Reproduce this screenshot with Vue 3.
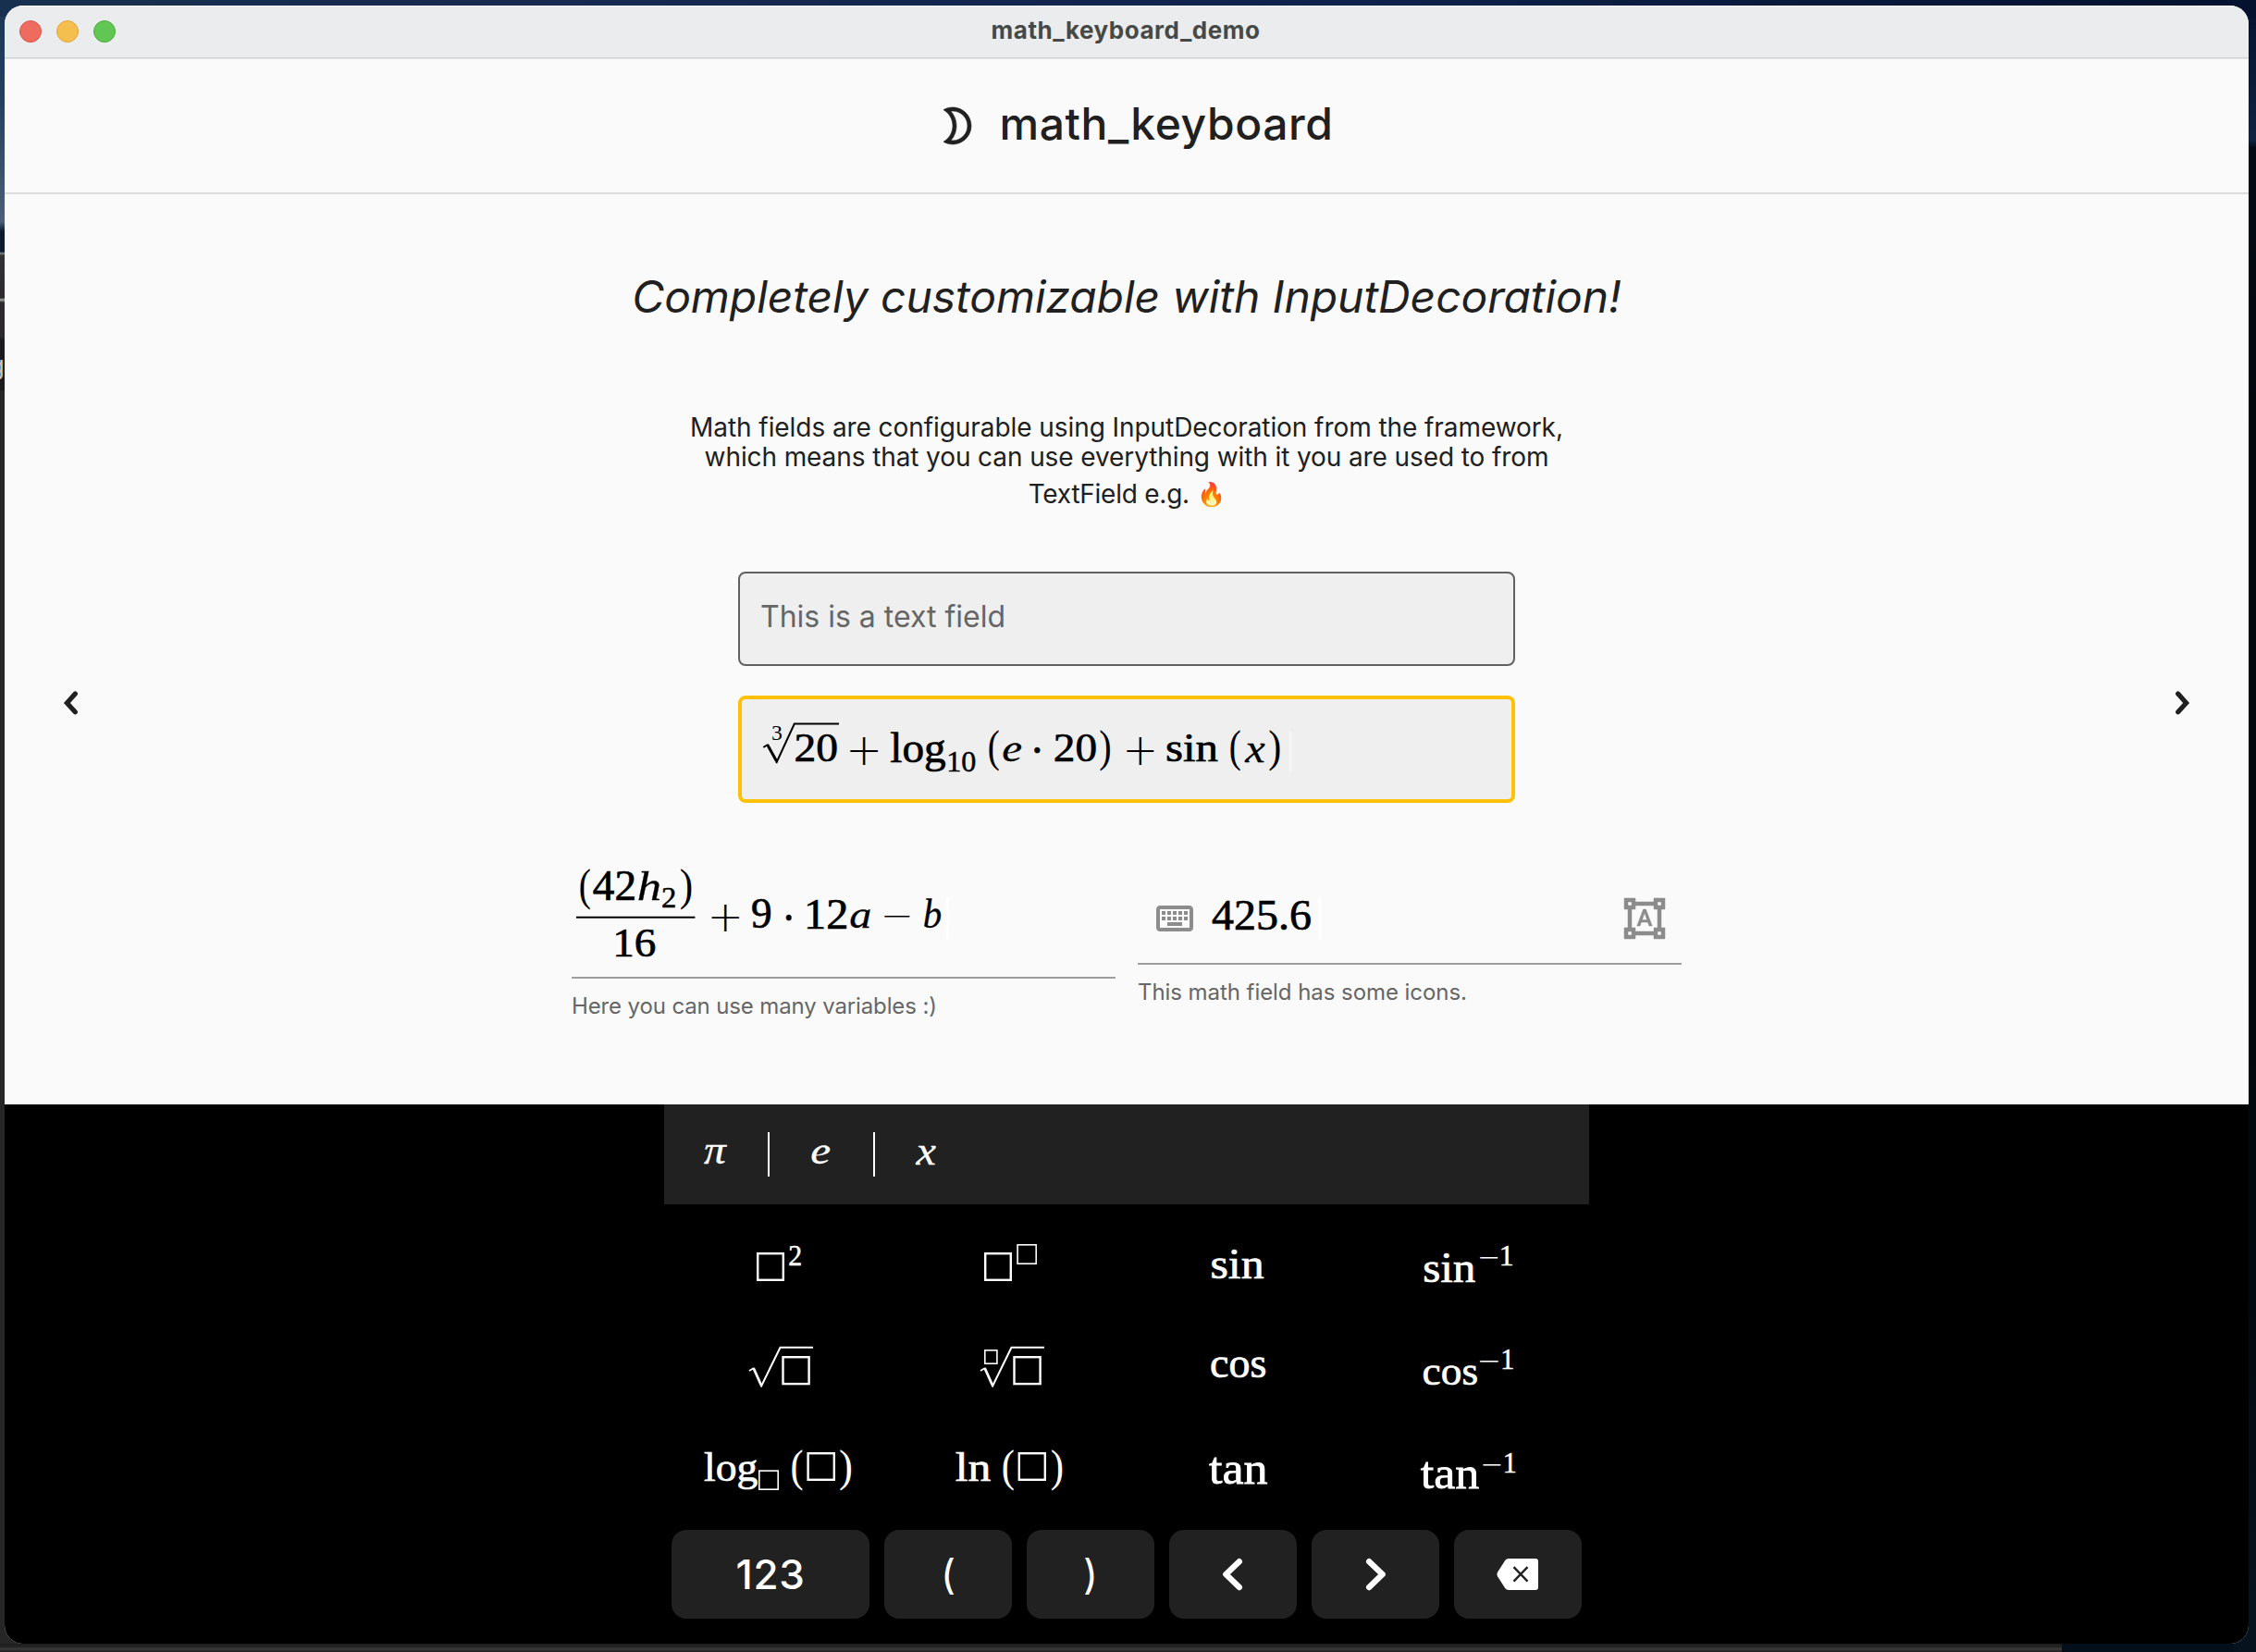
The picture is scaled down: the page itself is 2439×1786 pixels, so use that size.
<script setup>
import { h } from 'vue'

// ---- Math typesetting -------------------------------------------------
// A glyph run is [text, face, left, right, top, bottom]: the run is scaled
// so that its ink fills the given box.
const faces = {
  n: { family: '"Liberation Serif", serif', style: 'normal', weight: 400, stroke: 0.7 },
  i: { family: '"Liberation Serif", serif', style: 'italic', weight: 400, stroke: 0.3 },
  p: { family: '"Liberation Serif", serif', style: 'normal', weight: 400, stroke: 0 },
  o: { family: '"DejaVu Sans", sans-serif', style: 'normal', weight: 200, stroke: 0 }
}
const ctx = document.createElement('canvas').getContext('2d')

function glyphs([text, face, l, r, t, b]) {
  const f = faces[face]
  ctx.font = `${f.style} ${f.weight} 450px ${f.family}`
  const m = ctx.measureText(text)
  const sx = (r - l) / ((m.actualBoundingBoxLeft + m.actualBoundingBoxRight) / 10)
  const sy = (b - t) / ((m.actualBoundingBoxAscent + m.actualBoundingBoxDescent) / 10)
  const x = l + (m.actualBoundingBoxLeft / 10) * sx
  const y = t + (m.actualBoundingBoxAscent / 10) * sy
  return h('text', {
    transform: `translate(${x.toFixed(2)} ${y.toFixed(2)}) scale(${sx.toFixed(4)} ${sy.toFixed(4)})`,
    'font-family': f.family,
    'font-size': 45,
    'font-style': f.style,
    'font-weight': f.weight,
    fill: 'currentColor',
    stroke: f.stroke ? 'currentColor' : 'none',
    'stroke-width': f.stroke
  }, text)
}

const Formula = (props) => {
  const [x, y, w, ht] = props.frame
  const line = (d, width) => h('path', {
    d, fill: 'none', stroke: 'currentColor', 'stroke-width': width, 'stroke-linejoin': 'miter'
  })
  return h('svg', { viewBox: `${x} ${y} ${w} ${ht}`, width: w, height: ht, overflow: 'visible' }, [
    ...(props.runs || []).map(glyphs),
    ...(props.slots || []).map(([l, t, r, b]) => {
      const s = r - l > 28 ? 2.4 : 1.6
      return h('rect', {
        x: l + s / 2, y: t + s / 2, width: r - l - s, height: b - t - s,
        fill: 'none', stroke: 'currentColor', 'stroke-width': s
      })
    }),
    ...(props.rules || []).map(([d, width]) => line(d, width)),
    props.cursor
      ? h('rect', { x: props.cursor[0], y: props.cursor[1], width: 3, height: 45, fill: props.cursor[2] })
      : null
  ])
}
Formula.props = ['frame', 'runs', 'slots', 'rules', 'cursor']

const logField = {
  frame: [802, 756, 832, 108],
  runs: [
    ['3', 'p', 835, 845, 785.5, 800.7],
    ['20', 'n', 860, 904.6, 793.3, 823.5],
    ['+', 'o', 918.6, 949, 796.7, 827],
    ['log', 'n', 963, 1022, 792, 834],
    ['10', 'n', 1025.8, 1054.4, 813.3, 834.3],
    ['(', 'p', 1069, 1080, 789.3, 834],
    ['e', 'i', 1084, 1104, 802.8, 823.5],
    ['·', 'n', 1118, 1124.6, 808, 814],
    ['20', 'n', 1140.3, 1184.6, 793.3, 823.5],
    [')', 'p', 1189.6, 1200.3, 789.3, 834],
    ['+', 'o', 1217.7, 1247.2, 796.7, 827],
    ['sin', 'n', 1261.5, 1317, 793, 823.5],
    ['(', 'p', 1330, 1341, 789.3, 834],
    ['x', 'i', 1345.6, 1367.5, 802.8, 823.5],
    [')', 'p', 1372.6, 1383.8, 789.3, 834]
  ],
  rules: [['M825.3 808L830 805', 2], ['M829.6 805L839.6 823', 3], ['M839.2 825L858.8 782.6H907', 2]],
  cursor: [1393.5, 790, '#f5f5f5']
}

const variableField = {
  frame: [618, 900, 588, 156],
  runs: [
    ['(', 'p', 626.9, 638, 939.3, 983.7],
    ['42', 'n', 641.5, 685.8, 942.7, 973.3],
    ['h', 'i', 690.5, 713.5, 941.7, 973.3],
    ['2', 'n', 715.9, 729.7, 960, 981],
    [')', 'p', 736, 747.5, 939.3, 983.7],
    ['16', 'n', 666, 708.7, 1004, 1034.7],
    ['+', 'o', 768.8, 799, 976.7, 1006.7],
    ['9', 'n', 813.5, 833.3, 972.7, 1004],
    ['·', 'n', 849.5, 855.8, 988.8, 994.8],
    ['12', 'n', 872.8, 915, 972.7, 1003.5],
    ['a', 'i', 919, 940.8, 982.3, 1003.7],
    ['−', 'o', 955.9, 983.5, 990, 992.4],
    ['b', 'i', 999, 1017.5, 972, 1003.7]
  ],
  rules: [['M623 991.7H751.4', 2]],
  cursor: [1023, 970, '#ffffff']
}

const numberField = {
  frame: [1294, 969.5, 460, 48],
  runs: [['425.6', 'n', 1310.8, 1417.3, 974.3, 1006]],
  cursor: [1425, 971, '#ffffff']
}

const variables = [
  { frame: [718, 1224, 112, 48], runs: [['π', 'i', 761, 786.2, 1237.7, 1259]] },
  { frame: [832, 1224, 112, 48], runs: [['e', 'i', 877, 897, 1238, 1259]] },
  { frame: [946, 1224, 112, 48], runs: [['x', 'i', 989.8, 1011.7, 1238, 1259]] }
]

const cell = (col, row) => [718 + 250 * col, 1312 + 112 * row, 250, 112]
const functionKeys = [
  { frame: cell(0, 0), runs: [['2', 'n', 853.2, 865.8, 1347, 1368.3]], slots: [[818, 1354, 848, 1385]] },
  { frame: cell(1, 0), slots: [[1064, 1354, 1094, 1385], [1099.3, 1345, 1121, 1367]] },
  { frame: cell(2, 0), runs: [['sin', 'n', 1310, 1366.6, 1351, 1382.3]] },
  {
    frame: cell(3, 0),
    runs: [['sin', 'n', 1539.7, 1595.4, 1356, 1387.2], ['−', 'o', 1600, 1619.3, 1359, 1361], ['1', 'n', 1623.3, 1635.2, 1347, 1368]]
  },
  {
    frame: cell(0, 1),
    slots: [[845.3, 1466, 875.8, 1497.3]],
    rules: [['M810 1482L815 1479', 1.8], ['M814.6 1479L822.9 1497.5', 2.8], ['M822.6 1499.5L843.5 1456.8H879', 2]]
  },
  {
    frame: cell(1, 1),
    slots: [[1095.3, 1466, 1125.8, 1497.3], [1064, 1459, 1078.7, 1475]],
    rules: [['M1060 1482L1065 1479', 1.8], ['M1064.6 1479L1072.9 1497.5', 2.8], ['M1072.6 1499.5L1093.5 1456.8H1129', 2]]
  },
  { frame: cell(2, 1), runs: [['cos', 'n', 1309.5, 1368, 1467, 1489.7]] },
  {
    frame: cell(3, 1),
    runs: [['cos', 'n', 1539, 1596.7, 1476, 1498], ['−', 'o', 1600, 1620, 1470.8, 1472.8], ['1', 'n', 1624.6, 1635.9, 1459.3, 1480.3]]
  },
  {
    frame: cell(0, 2),
    runs: [['log', 'n', 761.7, 818.7, 1570, 1610.5], ['(', 'p', 855.9, 867.8, 1567, 1612], [')', 'p', 908.3, 920.2, 1567, 1612]],
    slots: [[820, 1589.3, 842, 1611], [872.4, 1570, 903, 1601]]
  },
  {
    frame: cell(1, 2),
    runs: [['ln', 'n', 1033.6, 1071.4, 1570, 1601], ['(', 'p', 1084, 1096, 1567, 1612], [')', 'p', 1137, 1148.4, 1567, 1612]],
    slots: [[1100.6, 1570, 1131, 1601]]
  },
  { frame: cell(2, 2), runs: [['tan', 'n', 1306.9, 1370.6, 1576, 1604.7]] },
  {
    frame: cell(3, 2),
    runs: [['tan', 'n', 1535.7, 1599.4, 1581, 1610], ['−', 'o', 1603.4, 1622.6, 1582.7, 1584.7], ['1', 'n', 1627.2, 1638.5, 1571.3, 1592.3]]
  }
]
</script>

<template>
  <div class="desktop">
    <span class="behind">g</span>
    <div class="window">
      <header class="titlebar">
        <div class="lights">
          <i class="light close"></i>
          <i class="light minimize"></i>
          <i class="light zoom"></i>
        </div>
        <span class="window-title">math_keyboard_demo</span>
      </header>

      <div class="app-header">
        <svg class="moon" viewBox="0 0 24 24" width="48" height="48" fill="currentColor" stroke="currentColor" stroke-width="0.3">
          <path fill-rule="evenodd" d="M9 2c-1.82 0-3.53.5-5 1.35C6.99 5.08 9 8.3 9 12s-2.01 6.92-5 8.65C5.47 21.5 7.18 22 9 22c5.52 0 10-4.48 10-10S14.52 2 9 2zM9 4c4.41 0 8 3.59 8 8s-3.59 8-8 8c-.34 0-.68-.02-1.01-.07C9.91 17.77 11 14.99 11 12s-1.09-5.77-3.01-7.93C8.32 4.02 8.66 4 9 4z" />
        </svg>
        <h1>math_keyboard</h1>
      </div>

      <main class="stage">
        <div class="pager prev">
          <svg viewBox="0 0 48 48" width="48" height="48" fill="none" stroke="currentColor" stroke-width="5.2" stroke-linecap="round"><path d="M29.3 14L20.4 24L29.3 33.8" /></svg>
        </div>

        <section class="page">
          <h2>Completely customizable with InputDecoration!</h2>
          <p class="intro">
            <span class="l1">Math fields are configurable using InputDecoration from the framework,</span>
            <span class="l2">which means that you can use everything with it you are used to from</span>
            <span class="l3">TextField e.g. <span class="emoji">🔥</span></span>
          </p>

          <div class="field text-field"><span>This is a text field</span></div>
          <div class="field math-field"><Formula v-bind="logField" /></div>

          <div class="pair">
            <div class="line-field">
              <div class="content"><Formula v-bind="variableField" /></div>
              <div class="helper many">Here you can use many variables :)</div>
            </div>
            <div class="line-field">
              <div class="content with-icons">
                <svg class="ico" viewBox="0 0 24 24" width="48" height="48" fill="currentColor">
                  <path d="M20 7v10H4V7h16m0-2H4c-1.1 0-1.99.9-1.99 2L2 17c0 1.1.9 2 2 2h16c1.1 0 2-.9 2-2V7c0-1.1-.9-2-2-2zm-9 3h2v2h-2V8zm0 3h2v2h-2v-2zM8 8h2v2H8V8zm0 3h2v2H8v-2zm-3 0h2v2H5v-2zm0-3h2v2H5V8zm3 6h8v2H8v-2zm6-3h2v2h-2v-2zm0-3h2v2h-2V8zm3 3h2v2h-2v-2zm0-3h2v2h-2V8z" />
                </svg>
                <Formula v-bind="numberField" />
                <svg class="ico" viewBox="0 0 24 24" width="48" height="48" fill="currentColor" stroke="currentColor" stroke-width="0.25">
                  <path d="M23 7V1h-6v2H7V1H1v6h2v10H1v6h6v-2h10v2h6v-6h-2V7h2zM3 3h2v2H3V3zm2 18H3v-2h2v2zm12-2H7v-2H5V7h2V5h10v2h2v10h-2v2zm4 2h-2v-2h2v2zM19 5V3h2v2h-2zm-5.27 9h-3.49l-.73 2H7.89l3.4-9h1.4l3.41 9h-1.63l-.74-2zm-3.04-1.26h2.61L12 8.91l-1.31 3.83z" />
                </svg>
              </div>
              <div class="helper icons">This math field has some icons.</div>
            </div>
          </div>
        </section>

        <div class="pager next">
          <svg viewBox="0 0 48 48" width="48" height="48" fill="none" stroke="currentColor" stroke-width="5.2" stroke-linecap="round"><path d="M18.7 14L27.6 24L18.7 33.8" /></svg>
        </div>
      </main>

      <div class="keyboard">
        <div class="variables">
          <div v-for="(v, k) in variables" :key="k" class="variable"><Formula v-bind="v" /></div>
        </div>
        <div class="functions">
          <Formula v-for="(f, k) in functionKeys" :key="k" v-bind="f" />
        </div>
        <div class="bottom-row">
          <div class="key wide">123</div>
          <div class="key paren">(</div>
          <div class="key paren">)</div>
          <div class="key">
            <svg viewBox="0 0 48 48" width="48" height="48" fill="none" stroke="currentColor" stroke-width="6.4" stroke-linecap="round" stroke-linejoin="round"><path d="M30.8 10.2L16.4 24L30.8 38" /></svg>
          </div>
          <div class="key">
            <svg viewBox="0 0 48 48" width="48" height="48" fill="none" stroke="currentColor" stroke-width="6.4" stroke-linecap="round" stroke-linejoin="round"><path d="M17.2 10.2L31.6 24L17.2 38" /></svg>
          </div>
          <div class="key">
            <svg viewBox="0 0 48 48" width="48" height="48">
              <path fill="#fff" d="M14 7H43Q46 7 46 10V38Q46 41 43 41H14Q11.600 41 10.200 39L2 26.200Q0.800 24 2 21.800L10.200 9Q11.600 7 14 7Z" />
              <path d="M19.500 16.200L34.500 31.600M34.500 16.200L19.500 31.600" stroke="#212121" stroke-width="2.400" />
            </svg>
          </div>
        </div>
      </div>
    </div>
  </div>
</template>

<style>
body {
  margin: 0;
  background: #020a16;
}
</style>

<style scoped>
.desktop {
  position: relative;
  box-sizing: border-box;
  width: 2439px;
  height: 1786px;
  padding: 6px 8px 9px 5px;
  overflow: hidden;
  font-family: Inter, sans-serif;
  background:
    linear-gradient(90deg, #18304f, #17294f 30%, #10224a 60%, #04122f) top / 100% 18px no-repeat,
    linear-gradient(180deg, #1c3555 0, #24405f 110px, #4b6077 240px, #0c1a30 250px, #0c1a30 272px, #8a8a8c 274px, #323133 276px, #2c2a2c 322px, #aaa 324px, #2c2a2c 327px, #2a282a 365px, #1b1a1c 367px, #1b1a1c 421px, #262626 423px) left top / 24px 1777px no-repeat,
    linear-gradient(180deg, #04122f 0, #0f2242 152px, #040a14 160px, #02060d 500px, #02080f 1400px, #06131f 1786px) right / 24px 100% no-repeat,
    linear-gradient(180deg, #1d1d1d 0, #242424 4px, #3a3a3a 5px, #333 7px, #1c181b 9px) left bottom / 2229px 9px no-repeat,
    #040f1c;
}
.behind {
  position: absolute;
  top: 378px;
  left: 0;
  width: 5px;
  height: 34px;
  overflow: hidden;
  display: flex;
  justify-content: flex-end;
  color: #c4c4c4;
  font-size: 28px;
  line-height: 34px;
}
.window {
  box-sizing: border-box;
  height: 100%;
  display: flex;
  flex-direction: column;
  border-radius: 20px;
  overflow: hidden;
  background: #fafafa;
  color: #202020;
}
.titlebar {
  box-sizing: border-box;
  height: 58px;
  flex: none;
  display: grid;
  grid-template-columns: 1fr auto 1fr;
  align-items: center;
  background: #ebecee;
  border-bottom: 1px solid #e2e4e5;
  box-shadow: inset 0 1px #fff, inset 0 -1px #ced2d5;
}
.lights {
  display: flex;
  gap: 16px;
  padding-left: 16px;
  padding-bottom: 1px;
}
.light {
  box-sizing: border-box;
  width: 24px;
  height: 24px;
  border-radius: 50%;
  border: 1px solid;
}
.close { background: #ee6b5f; border-color: #d9564b; }
.minimize { background: #f5bf4f; border-color: #dda63c; }
.zoom { background: #61c654; border-color: #4fab43; }
.window-title {
  font-size: 26px;
  font-weight: 700;
  letter-spacing: 0.52px;
  color: #474947;
  padding-bottom: 4px;
  margin-left: -2px;
}
.app-header {
  box-sizing: border-box;
  height: 146px;
  flex: none;
  display: flex;
  align-items: center;
  justify-content: center;
  gap: 21px;
  padding-left: 17px;
  border-bottom: 2px solid #dbdbdb;
}
.app-header h1 {
  margin: 0;
  padding-bottom: 5px;
  font-size: 48px;
  font-weight: 500;
  letter-spacing: 0.57px;
}
.stage {
  height: 984px;
  flex: none;
  display: grid;
  grid-template-columns: 134px 1fr 134px;
}
.pager {
  display: flex;
  align-items: flex-start;
  justify-content: center;
  padding-top: 525.5px;
}
.prev { padding-left: 8px; }
.next { padding-right: 8px; }
.page {
  display: flex;
  flex-direction: column;
  align-items: center;
}
h2 {
  margin: 82px 0 0;
  font-size: 48px;
  line-height: 58px;
  font-weight: 400;
  font-style: italic;
  letter-spacing: -0.08px;
  white-space: nowrap;
}
.intro {
  margin: 96px 0 0;
  display: flex;
  flex-direction: column;
  align-items: center;
  font-size: 28px;
  white-space: nowrap;
}
.intro > span { line-height: 32px; }
.intro .l1 { letter-spacing: -0.07px; }
.intro .l2 { letter-spacing: -0.1px; }
.intro .l3 {
  height: 48px;
  line-height: 48px;
  letter-spacing: -0.25px;
}
.emoji {
  position: relative;
  top: -1.5px;
  font-size: 25px;
}
.field {
  box-sizing: border-box;
  width: 840px;
  border-radius: 8px;
  background: #efefef;
  display: flex;
  align-items: center;
}
.text-field {
  margin-top: 60px;
  height: 102px;
  border: 2px solid #616161;
  padding: 0 22px 5px;
  font-size: 32px;
  color: #666;
}
.math-field {
  margin-top: 32px;
  height: 116px;
  border: 4px solid #ffc107;
  color: #000;
}
.pair {
  margin-top: 32px;
  display: flex;
  gap: 24px;
}
.line-field {
  width: 588px;
  color: #000;
}
.content {
  box-sizing: border-box;
  height: 158px;
  border-bottom: 2px solid #9e9e9e;
}
.with-icons {
  height: 143px;
  display: flex;
  align-items: center;
  padding: 45px 16px 0;
}
.ico { color: #8c8c8c; }
.helper {
  margin-top: 15px;
  font-size: 24px;
  line-height: 29px;
  color: #666;
}
.many { letter-spacing: -0.13px; }
.icons { letter-spacing: -0.06px; }
.keyboard {
  flex: 1;
  display: flex;
  flex-direction: column;
  align-items: center;
  background: #000;
  color: #fff;
}
.variables {
  width: 1000px;
  height: 108px;
  display: flex;
  align-items: center;
  background: #212121;
}
.variable {
  height: 48px;
  border-right: 2px solid #fff;
}
.variable:last-child { border-right: 0; }
.functions {
  padding-top: 10px;
  width: 1000px;
  display: grid;
  grid-template-columns: repeat(4, 250px);
  grid-auto-rows: 112px;
}
.bottom-row {
  margin-top: 6px;
  display: flex;
  gap: 16px;
}
.key {
  width: 138px;
  height: 96px;
  border-radius: 16px;
  background: #212121;
  display: flex;
  align-items: center;
  justify-content: center;
}
.wide {
  width: 214px;
  font-size: 44px;
  font-weight: 450;
  letter-spacing: 0.6px;
}
.paren {
  font-size: 44px;
}
svg { display: block; flex: none; }
</style>
